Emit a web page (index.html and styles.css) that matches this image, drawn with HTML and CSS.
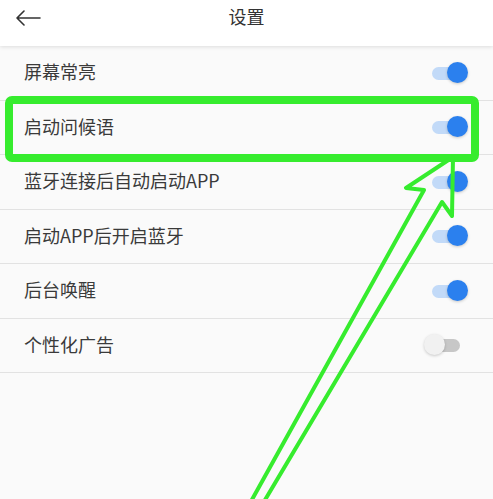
FILE: index.html
```html
<!DOCTYPE html>
<html lang="zh-CN">
<head>
    <meta charset="UTF-8">
    <meta name="viewport" content="width=device-width, initial-scale=1.0">
    <title>设置</title>
    <link rel="stylesheet" href="styles.css">
</head>
<body>
    <div class="page">
        <header class="top_bar">
            <span class="back">
                <svg width="26" height="16" viewBox="0 0 26 16">
                    <path d="M25 8H2M9 1L2 8l7 7" fill="none" stroke="#333" stroke-width="1.6" stroke-linecap="round" stroke-linejoin="round"/>
                </svg>
            </span>
            <h1>设置</h1>
        </header>

        <ul class="set_list">
            <li><span class="txt">屏幕常亮</span><span class="switch on"><i></i></span></li>
            <li><span class="txt">启动问候语</span><span class="switch on"><i></i></span></li>
            <li><span class="txt">蓝牙连接后自动启动APP</span><span class="switch on"><i></i></span></li>
            <li><span class="txt">启动APP后开启蓝牙</span><span class="switch on"><i></i></span></li>
            <li><span class="txt">后台唤醒</span><span class="switch on"><i></i></span></li>
            <li><span class="txt">个性化广告</span><span class="switch"><i></i></span></li>
        </ul>

        <!-- 注释用の枠と矢印 -->
        <svg class="mark" width="493" height="499" viewBox="0 0 493 499">
            <rect x="9" y="100" width="466" height="58" rx="3" fill="none" stroke="#36ec2e" stroke-width="8"/>
            <polygon points="453,157 406,188 424,190 249,505 262,505 442,202 452,216" fill="none" stroke="#36ec2e" stroke-width="4" stroke-linejoin="round"/>
        </svg>
    </div>
</body>
</html>
```

FILE: styles.css
```css
* {
    box-sizing: border-box;
}
body {
    margin: 0;
    background-color: #fafafa;
    font-family: "Noto Sans CJK SC", "Noto Sans", sans-serif;
    color: #333;
}
.page {
    position: relative;
    width: 493px;
    height: 499px;
    overflow: hidden;
}
.top_bar {
    height: 46px;
    background-color: #fff;
    box-shadow: 0 1px 4px rgba(0, 0, 0, 0.12);
    display: flex;
    align-items: flex-start;
    justify-content: center;
    position: relative;
}
.top_bar .back {
    position: absolute;
    left: 15px;
    top: 7px;
}
.top_bar h1 {
    margin: 0;
    padding-top: 2px;
    font-size: 18px;
    font-weight: normal;
    line-height: 28px;
    color: #333;
}
.set_list {
    list-style: none;
    margin: 0;
    padding: 0;
}
.set_list li {
    height: 54.5px;
    display: flex;
    align-items: center;
    justify-content: space-between;
    padding: 0 25px 0 24px;
    border-bottom: 1px solid #e2e2e2;
}
.set_list .txt {
    font-size: 18px;
    line-height: 24px;
    padding-bottom: 3px;
    color: #3a3a3a;
}
.switch {
    position: relative;
    width: 44px;
    height: 22px;
}
.switch::before {
    content: "";
    position: absolute;
    left: 8px;
    top: 5px;
    width: 28px;
    height: 13px;
    border-radius: 7px;
    background-color: #c7c7c7;
}
.switch i {
    position: absolute;
    left: 0;
    top: 0;
    width: 21px;
    height: 21px;
    border-radius: 50%;
    background-color: #f1f1f1;
    box-shadow: 0 1px 3px rgba(0, 0, 0, 0.2);
}
.switch.on::before {
    background-color: #c2daf8;
}
.switch.on i {
    left: 23px;
    background-color: #2b80ee;
}
.mark {
    position: absolute;
    left: 0;
    top: 0;
    pointer-events: none;
}
```
